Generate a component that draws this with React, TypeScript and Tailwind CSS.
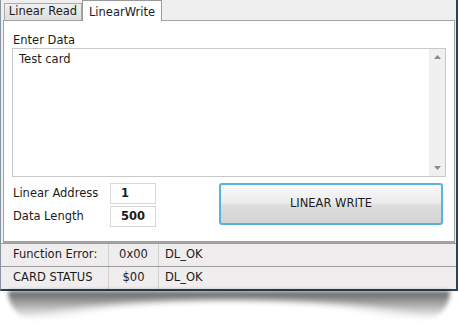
import React from 'react';

function Field({ label, value }: { label: string; value: string }) {
  return (
    <div className="flex items-center h-[21px]">
      <span className="w-[98px] pl-[1px]">{label}</span>
      <div className="w-[46px] h-[21px] border border-[#d6d6d6] bg-white flex items-center pl-[10px] font-bold">
        {value}
      </div>
    </div>
  );
}

function StatusRow({ name, code, text }: { name: string; code: string; text: string }) {
  return (
    <div className="flex h-[23px] border-t border-[#9c9c9c] bg-[#efeded]">
      <div className="w-[108px] pl-[12px] flex items-center border-r border-[#d2d0d0]">{name}</div>
      <div className="w-[50px] flex items-center justify-center border-r border-[#d2d0d0]">{code}</div>
      <div className="flex-1 pl-[6px] flex items-center">{text}</div>
    </div>
  );
}

export default function App() {
  return (
    <div className="w-[458px] h-[328px] bg-white font-['DejaVu_Sans','Verdana',sans-serif] text-[11.5px] text-[#1c1c1c]">
      <div className="w-[458px] border-l border-l-[#8894a0] border-r-2 border-r-[#2e4257] border-b-2 border-b-[#2e4257] bg-[#efefef]">
        {/* Tabs */}
        <div className="h-[20px] flex items-end pl-[3px]">
          <div className="w-[78px] h-[17px] border border-b-0 border-[#a9a9a9] bg-gradient-to-b from-[#f0f0f0] to-[#dedede] flex items-center justify-center">
            Linear Read
          </div>
          <div className="relative z-10 -mb-px w-[80px] h-[21px] border border-b-0 border-[#9a9a9a] bg-white flex items-start justify-center pt-[3px]">
            LinearWrite
          </div>
        </div>

        {/* Panel */}
        <div className="ml-[2px] mr-[1px] h-[223px] border border-b-2 border-[#a3a3a3] bg-white pl-[8px] pr-[8px] pt-[12px]">
          <div className="h-[15px] pl-[1px] leading-[15px]">Enter Data</div>
          <div className="h-[129px] border border-[#c9c9c9] flex">
            <div className="flex-1 pl-[6px] pt-[2px]">Test card</div>
            <div className="w-[16px] bg-[#f0f0f0] flex flex-col justify-between items-center py-[6px]">
              <svg width="7" height="4" viewBox="0 0 7 4"><path d="M0 4 L3.5 0 L7 4 Z" fill="#8a8a8a" /></svg>
              <svg width="7" height="4" viewBox="0 0 7 4"><path d="M0 0 L3.5 4 L7 0 Z" fill="#8a8a8a" /></svg>
            </div>
          </div>

          <div className="flex mt-[6px]">
            <div className="flex flex-col gap-[2px]">
              <Field label="Linear Address" value="1" />
              <Field label="Data Length" value="500" />
            </div>
            <button className="ml-[63px] w-[224px] h-[42px] rounded-[3px] border-2 border-[#58b4dc] bg-[linear-gradient(to_bottom,#f9f9f9_0%,#ececec_47%,#dedede_53%,#d3d3d3_100%)] flex items-center justify-center text-[11.5px] text-[#1c1c1c]">
              LINEAR WRITE
            </button>
          </div>
        </div>

        {/* Status */}
        <StatusRow name="Function Error:" code="0x00" text="DL_OK" />
        <StatusRow name="CARD STATUS" code="$00" text="DL_OK" />
      </div>

      {/* Curled shadow */}
      <div className="mx-[8px] h-[30px] blur-[2px] rounded-b-[40px] bg-[radial-gradient(ellipse_47%_80%_at_50%_100%,#ffffff_72%,rgba(255,255,255,0)_100%),linear-gradient(to_bottom,rgba(0,0,0,0.62),rgba(0,0,0,0)_95%)]" />
    </div>
  );
}
